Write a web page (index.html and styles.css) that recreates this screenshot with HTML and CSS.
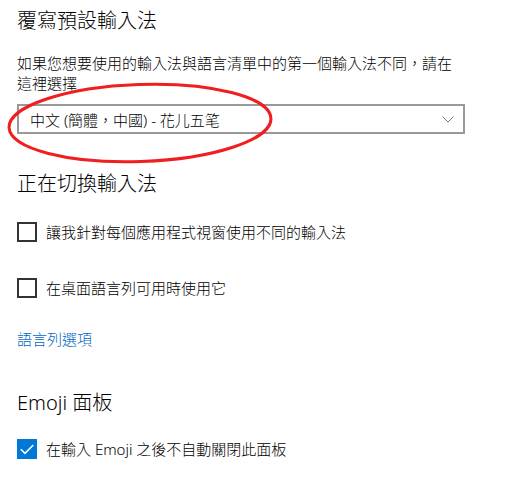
FILE: index.html
```html
<!DOCTYPE html>
<html lang="zh-Hant">
<head>
<meta charset="utf-8">
<title>輸入法設定</title>
<link rel="stylesheet" href="styles.css">
</head>
<body>
<main class="page">
  <h2 class="title">覆寫預設輸入法</h2>
  <p class="desc">如果您想要使用的輸入法與語言清單中的第一個輸入法不同，請在這裡選擇</p>
  <div class="select">
    <span class="select-text">中文 (簡體，中國) - 花儿五笔</span>
    <svg class="chevron" width="12" height="7" viewBox="0 0 12 7"><path d="M0.5 0.5 L6 6 L11.5 0.5" fill="none" stroke="#777" stroke-width="1"/></svg>
  </div>

  <h2 class="title title-switch">正在切換輸入法</h2>
  <label class="check check-first"><span class="box"></span><span class="label">讓我針對每個應用程式視窗使用不同的輸入法</span></label>
  <label class="check check-second"><span class="box"></span><span class="label">在桌面語言列可用時使用它</span></label>

  <a class="link" href="#">語言列選項</a>

  <h2 class="title title-emoji">Emoji 面板</h2>
  <label class="check check-emoji"><span class="box box-on"><svg width="20" height="20" viewBox="0 0 20 20"><path d="M3.8 10.2 L8 14.4 L16.3 6" fill="none" stroke="#fff" stroke-width="1.6"/></svg></span><span class="label">在輸入 Emoji 之後不自動關閉此面板</span></label>

  <svg class="annotation" width="290" height="90" viewBox="0 0 290 90"><ellipse cx="140" cy="44" rx="131" ry="38.5" transform="rotate(-2 140 44)" fill="none" stroke="#f01e1e" stroke-width="3"/></svg>
</main>
</body>
</html>
```

FILE: styles.css
```css
* { box-sizing: border-box; }
html, body { margin: 0; background: #fff; }
body {
  font-family: "Segoe UI", "Noto Sans", "Noto Sans CJK TC", sans-serif;
  font-weight: 300;
  color: #000;
}
.page {
  position: relative;
  width: 530px;
  height: 480px;
  padding: 7px 0 0 17px;
}
.title {
  margin: 0;
  font-size: 20px;
  font-weight: 300;
  line-height: 28px;
}
.desc {
  margin: 18px 0 0;
  width: 448px;
  font-size: 15px;
  line-height: 20px;
}
.select {
  margin-top: 11px;
  width: 448px;
  height: 30px;
  border: 2px solid #999;
  display: flex;
  align-items: center;
  justify-content: space-between;
  padding: 0 9px 0 11px;
  font-size: 15px;
}
.chevron { display: block; }
.title-switch { margin-top: 36px; }
.check {
  display: flex;
  align-items: center;
  height: 20px;
  font-size: 15px;
  line-height: 20px;
}
.check-first { margin-top: 24px; }
.check-second { margin-top: 36px; }
.check-emoji { margin-top: 22px; }
.box {
  width: 20px;
  height: 20px;
  border: 2px solid #333;
  margin-right: 9px;
  flex: none;
}
.box-on {
  border: none;
  background: #0078d7;
}
.box-on svg { display: block; }
.link {
  display: block;
  margin-top: 31px;
  width: max-content;
  font-size: 15px;
  line-height: 20px;
  color: #0067c0;
  text-decoration: none;
}
.title-emoji { margin-top: 40px; }
.annotation {
  position: absolute;
  left: 0;
  top: 79px;
  pointer-events: none;
}
```
